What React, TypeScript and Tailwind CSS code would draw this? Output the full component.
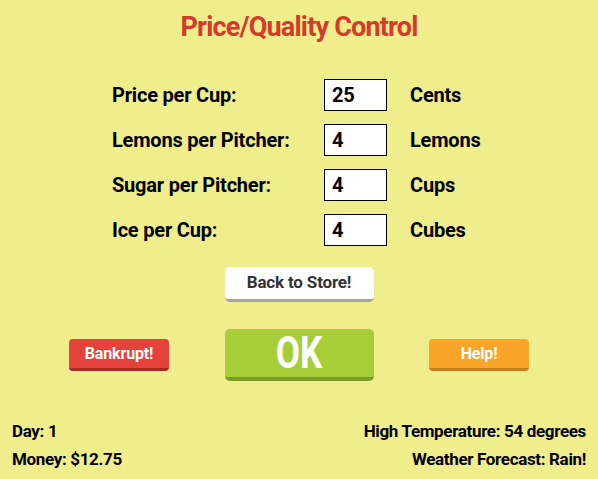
import React, { useState } from 'react';

interface FieldRow {
  label: string;
  value: string;
  unit: string;
}

const rows: FieldRow[] = [
  { label: 'Price per Cup:', value: '25', unit: 'Cents' },
  { label: 'Lemons per Pitcher:', value: '4', unit: 'Lemons' },
  { label: 'Sugar per Pitcher:', value: '4', unit: 'Cups' },
  { label: 'Ice per Cup:', value: '4', unit: 'Cubes' },
];

export default function App() {
  const [values, setValues] = useState(rows.map((r) => r.value));

  return (
    <div className="w-[598px] h-[479px] bg-[#f0ee8c] flex flex-col font-['Roboto',sans-serif] font-bold text-black">
      {/* Title */}
      <h1 className="text-center text-[27px] leading-none tracking-[-0.03em] text-[#d63a2b] pt-[14px]">
        Price/Quality Control
      </h1>

      {/* Settings */}
      <div className="flex flex-col gap-[13px] pl-[112px] mt-[38px]">
        {rows.map((row, i) => (
          <div key={row.label} className="flex items-center h-[32px] text-[20px] tracking-[-0.01em]">
            <span className="w-[212px]">{row.label}</span>
            <input
              value={values[i]}
              onChange={(e) => {
                const next = [...values];
                next[i] = e.target.value;
                setValues(next);
              }}
              className="w-[63px] h-[32px] bg-white border border-black px-[7px] text-[20px] font-bold outline-none"
            />
            <span className="ml-[23px]">{row.unit}</span>
          </div>
        ))}
      </div>

      {/* Buttons */}
      <div className="flex justify-center mt-[21px]">
        <button className="w-[149px] h-[35px] rounded-[5px] bg-white border-b-[3px] border-[#a5a59d] text-[#333333] text-[17px] font-bold tracking-[-0.01em]">
          Back to Store!
        </button>
      </div>

      <div className="flex items-center justify-between px-[69px] mt-[27px]">
        <button className="w-[100px] h-[32px] rounded-[4px] bg-[#e4423a] border-b-[3px] border-[#a82a22] text-white text-[16px] font-bold tracking-[-0.01em]">
          Bankrupt!
        </button>
        <button className="w-[149px] h-[52px] rounded-[5px] bg-[#a6ce39] border-b-[4px] border-[#7b9a2a] text-white font-bold">
          <span className="inline-block text-[44px] leading-none scale-x-[0.8]">OK</span>
        </button>
        <button className="w-[100px] h-[32px] rounded-[4px] bg-[#f9a52a] border-b-[3px] border-[#c47e1c] text-white text-[16px] font-bold tracking-[-0.01em]">
          Help!
        </button>
      </div>

      {/* Footer */}
      <div className="mt-auto flex justify-between px-[12px] pb-[6px] text-[17px] leading-[28px] tracking-[-0.02em]">
        <div className="flex flex-col">
          <span>Day: 1</span>
          <span>Money: $12.75</span>
        </div>
        <div className="flex flex-col items-end">
          <span>High Temperature: 54 degrees</span>
          <span>Weather Forecast: Rain!</span>
        </div>
      </div>
    </div>
  );
}
